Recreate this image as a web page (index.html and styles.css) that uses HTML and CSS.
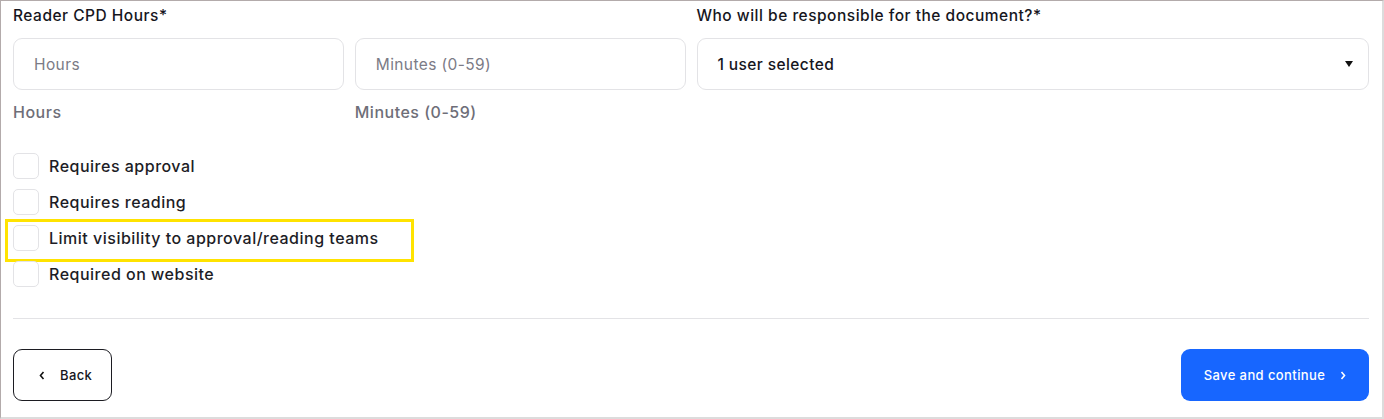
FILE: index.html
```html
<!DOCTYPE html>
<html lang="en">
<head>
    <meta charset="UTF-8">
    <meta name="viewport" content="width=device-width, initial-scale=1.0">
    <title>Document settings</title>
    <link rel="stylesheet" href="styles.css">
</head>
<body>
    <div class="frame">
        <div class="top-row">
            <div class="field-group">
                <label class="field-label">Reader CPD Hours*</label>
                <div class="pair">
                    <div class="field">
                        <input class="text-input" type="text" placeholder="Hours">
                        <div class="hint">Hours</div>
                    </div>
                    <div class="field">
                        <input class="text-input" type="text" placeholder="Minutes (0-59)">
                        <div class="hint">Minutes (0-59)</div>
                    </div>
                </div>
            </div>
            <div class="field-group">
                <label class="field-label">Who will be responsible for the document?*</label>
                <div class="select-box">
                    <span>1 user selected</span>
                    <svg class="caret" width="8" height="6" viewBox="0 0 8 6"><path d="M0 0H8L4 6Z" fill="#111"/></svg>
                </div>
            </div>
        </div>

        <div class="checks">
            <label class="check-row"><span class="box"></span>Requires approval</label>
            <label class="check-row"><span class="box"></span>Requires reading</label>
            <label class="check-row highlighted"><span class="box"></span>Limit visibility to approval/reading teams</label>
            <label class="check-row"><span class="box"></span>Required on website</label>
        </div>

        <hr class="divider">

        <div class="actions">
            <button class="btn btn-back">
                <svg width="6" height="9" viewBox="0 0 6 9"><path d="M4.5 1L1.5 4.5L4.5 8" stroke="#111" stroke-width="1.6" fill="none"/></svg>
                Back
            </button>
            <button class="btn btn-save">
                Save and continue
                <svg width="6" height="9" viewBox="0 0 6 9"><path d="M1.5 1L4.5 4.5L1.5 8" stroke="#fff" stroke-width="1.6" fill="none"/></svg>
            </button>
        </div>
    </div>
</body>
</html>
```

FILE: styles.css
```css
* {
    margin: 0;
    padding: 0;
    box-sizing: border-box;
}

body {
    font-family: Inter, 'Noto Sans', sans-serif;
    background: #fff;
    color: #16161d;
}

.frame {
    width: 1384px;
    height: 419px;
    border-left: 1px solid #b3abab;
    border-top: 1px solid #b3abab;
    border-right: 2px solid #dcdcdc;
    border-bottom: 2px solid #dcdcdc;
    padding: 0 13px 0 12px;
}

.top-row {
    display: grid;
    grid-template-columns: 1fr 1fr;
    gap: 11px;
}

.field-label {
    display: block;
    font-size: 15.5px;
    font-weight: 500;
    letter-spacing: 0.5px;
    line-height: 22px;
    margin-top: 4px;
    margin-bottom: 11px;
}

.pair {
    display: grid;
    grid-template-columns: 1fr 1fr;
    gap: 11px;
}

.text-input {
    width: 100%;
    height: 52px;
    border: 1px solid #e3e3e6;
    border-radius: 9px;
    padding: 0 20px;
    font-family: inherit;
    font-size: 15.5px;
    letter-spacing: 0.4px;
    color: #16161d;
    outline: none;
}

.text-input::placeholder {
    color: #7b7b86;
}

.hint {
    margin-top: 11px;
    font-size: 16px;
    letter-spacing: 0.5px;
    line-height: 22px;
    color: #6e6e78;
    font-weight: 500;
}

.select-box {
    height: 52px;
    border: 1px solid #e3e3e6;
    border-radius: 9px;
    padding: 0 15px 0 20px;
    display: flex;
    align-items: center;
    justify-content: space-between;
    font-size: 15.5px;
    letter-spacing: 0.4px;
    font-weight: 500;
}

.checks {
    margin-top: 30px;
    display: flex;
    flex-direction: column;
    gap: 10px;
}

.check-row {
    position: relative;
    display: flex;
    align-items: center;
    gap: 10px;
    height: 26px;
    font-size: 16px;
    letter-spacing: 0.5px;
    font-weight: 500;
    color: #1d1d26;
}

.box {
    width: 26px;
    height: 26px;
    border: 1px solid #e3e3e6;
    border-radius: 5px;
}

.highlighted::after {
    content: "";
    position: absolute;
    left: -8px;
    top: -6px;
    width: 403px;
    height: 37px;
    border: 3px solid #ffe300;
}

.divider {
    border: none;
    border-top: 1px solid #e3e3e6;
    margin-top: 31px;
}

.actions {
    margin-top: 30px;
    display: flex;
    justify-content: space-between;
}

.btn {
    height: 52px;
    border-radius: 9px;
    font-family: inherit;
    font-size: 13px;
    letter-spacing: 0.4px;
    font-weight: 500;
    display: flex;
    align-items: center;
    gap: 15px;
    cursor: pointer;
}

.btn-back {
    width: 99px;
    padding-left: 25px;
    background: #fff;
    border: 1px solid #1c1c22;
    color: #16161d;
}

.btn-save {
    width: 188px;
    justify-content: center;
    background: #1766ff;
    border: none;
    color: #fff;
}
```
